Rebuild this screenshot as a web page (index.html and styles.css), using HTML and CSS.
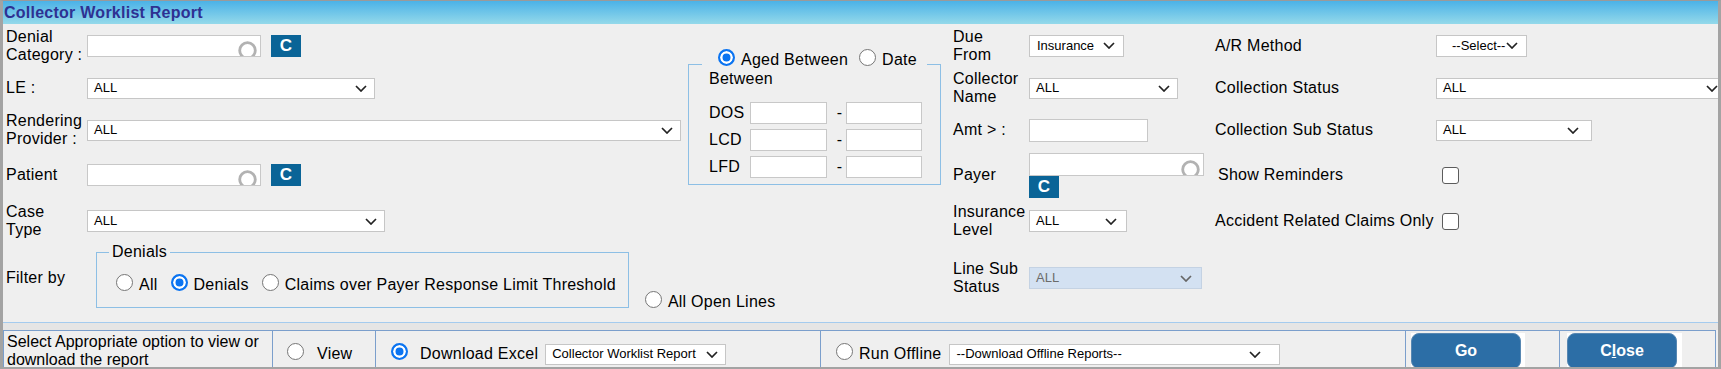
FILE: index.html
```html
<!DOCTYPE html>
<html lang="en">
  <head>
    <meta charset="UTF-8" />
    <title>Collector Worklist Report</title>
    <link rel="stylesheet" href="styles.css">
  </head>
  <body>
    <div class="frame">
      <div class="title-bar">Collector Worklist Report</div>

      <div class="form-grid">
        <!-- row 1 -->
        <div class="lbl lbl-left">Denial<br>Category :</div>
        <div class="ctl">
          <div class="text-box lookup">
            <svg class="ring" width="19" height="19" viewBox="0 0 19 19"><circle cx="9.5" cy="9.5" r="7.8" fill="none" stroke="#b2b2b2" stroke-width="2.8"/></svg>
          </div>
          <span class="c-btn">C</span>
        </div>

        <!-- date range box (rows 1-5) -->
        <div class="range">
          <div class="range-legend">
            <label class="opt"><span class="radio on"></span>Aged Between</label>
            <label class="opt"><span class="radio"></span>Date</label>
          </div>
          <div class="range-sub">Between</div>
          <div class="range-row">
            <span class="range-lbl">DOS</span>
            <span class="text-box from"></span>
            <span class="dash">-</span>
            <span class="text-box to"></span>
          </div>
          <div class="range-row">
            <span class="range-lbl">LCD</span>
            <span class="text-box from"></span>
            <span class="dash">-</span>
            <span class="text-box to"></span>
          </div>
          <div class="range-row">
            <span class="range-lbl">LFD</span>
            <span class="text-box from"></span>
            <span class="dash">-</span>
            <span class="text-box to"></span>
          </div>
        </div>

        <div class="lbl">Due<br>From</div>
        <div class="ctl">
          <div class="select sel-due"><span>Insurance</span><svg class="chev" width="12" height="7" viewBox="0 0 12 7"><path d="M1 1l5 5 5-5" fill="none" stroke="#222" stroke-width="1.7"/></svg></div>
        </div>
        <div class="lbl">A/R Method</div>
        <div class="ctl">
          <div class="select sel-ar"><span>--Select--</span><svg class="chev" width="12" height="7" viewBox="0 0 12 7"><path d="M1 1l5 5 5-5" fill="none" stroke="#222" stroke-width="1.7"/></svg></div>
        </div>

        <!-- row 2 -->
        <div class="lbl lbl-left">LE :</div>
        <div class="ctl">
          <div class="select sel-le"><span>ALL</span><svg class="chev" width="12" height="7" viewBox="0 0 12 7"><path d="M1 1l5 5 5-5" fill="none" stroke="#222" stroke-width="1.7"/></svg></div>
        </div>
        <div class="lbl">Collector<br>Name</div>
        <div class="ctl">
          <div class="select sel-coll"><span>ALL</span><svg class="chev" width="12" height="7" viewBox="0 0 12 7"><path d="M1 1l5 5 5-5" fill="none" stroke="#222" stroke-width="1.7"/></svg></div>
        </div>
        <div class="lbl">Collection Status</div>
        <div class="ctl">
          <div class="select sel-cs"><span>ALL</span><svg class="chev" width="12" height="7" viewBox="0 0 12 7"><path d="M1 1l5 5 5-5" fill="none" stroke="#222" stroke-width="1.7"/></svg></div>
        </div>

        <!-- row 3 -->
        <div class="lbl lbl-left">Rendering<br>Provider :</div>
        <div class="ctl">
          <div class="select sel-rp"><span>ALL</span><svg class="chev" width="12" height="7" viewBox="0 0 12 7"><path d="M1 1l5 5 5-5" fill="none" stroke="#222" stroke-width="1.7"/></svg></div>
        </div>
        <div class="lbl">Amt &gt; :</div>
        <div class="ctl"><div class="text-box amt"></div></div>
        <div class="lbl">Collection Sub Status</div>
        <div class="ctl">
          <div class="select sel-css"><span>ALL</span><svg class="chev" width="12" height="7" viewBox="0 0 12 7"><path d="M1 1l5 5 5-5" fill="none" stroke="#222" stroke-width="1.7"/></svg></div>
        </div>

        <!-- row 4 -->
        <div class="lbl lbl-left">Patient</div>
        <div class="ctl">
          <div class="text-box lookup">
            <svg class="ring" width="19" height="19" viewBox="0 0 19 19"><circle cx="9.5" cy="9.5" r="7.8" fill="none" stroke="#b2b2b2" stroke-width="2.8"/></svg>
          </div>
          <span class="c-btn">C</span>
        </div>
        <div class="lbl">Payer</div>
        <div class="ctl payer">
          <div class="text-box lookup payer-box">
            <svg class="ring" width="19" height="19" viewBox="0 0 19 19"><circle cx="9.5" cy="9.5" r="7.8" fill="none" stroke="#b2b2b2" stroke-width="2.8"/></svg>
          </div>
          <span class="c-btn">C</span>
        </div>
        <div class="lbl reminders">Show Reminders</div>
        <div class="ctl"><span class="check"></span></div>

        <!-- row 5 -->
        <div class="lbl lbl-left">Case<br>Type</div>
        <div class="ctl">
          <div class="select sel-case"><span>ALL</span><svg class="chev" width="12" height="7" viewBox="0 0 12 7"><path d="M1 1l5 5 5-5" fill="none" stroke="#222" stroke-width="1.7"/></svg></div>
        </div>
        <div class="lbl">Insurance<br>Level</div>
        <div class="ctl">
          <div class="select sel-lvl"><span>ALL</span><svg class="chev" width="12" height="7" viewBox="0 0 12 7"><path d="M1 1l5 5 5-5" fill="none" stroke="#222" stroke-width="1.7"/></svg></div>
        </div>
        <div class="lbl">Accident Related Claims Only</div>
        <div class="ctl"><span class="check"></span></div>

        <!-- row 6 -->
        <div class="lbl lbl-left">Filter by</div>
        <div class="filter">
          <fieldset class="denials">
            <legend>Denials</legend>
            <div class="opts">
              <label class="opt"><span class="radio"></span>All</label>
              <label class="opt"><span class="radio on"></span>Denials</label>
              <label class="opt"><span class="radio"></span>Claims over Payer Response Limit Threshold</label>
            </div>
          </fieldset>
          <label class="opt open-lines"><span class="radio"></span>All Open Lines</label>
        </div>
        <div class="lbl">Line Sub<br>Status</div>
        <div class="ctl">
          <div class="select sel-line disabled"><span>ALL</span><svg class="chev" width="12" height="7" viewBox="0 0 12 7"><path d="M1 1l5 5 5-5" fill="none" stroke="#666" stroke-width="1.7"/></svg></div>
        </div>
      </div>

      <div class="sep"></div>

      <div class="action-bar">
        <div class="cell note">Select Appropriate option to view or download the report</div>
        <div class="cell view">
          <label class="opt"><span class="radio"></span>View</label>
        </div>
        <div class="cell excel">
          <label class="opt"><span class="radio on"></span>Download Excel</label>
          <div class="select sel-dl"><span>Collector Worklist Report</span><svg class="chev" width="12" height="7" viewBox="0 0 12 7"><path d="M1 1l5 5 5-5" fill="none" stroke="#222" stroke-width="1.7"/></svg></div>
        </div>
        <div class="cell offline">
          <label class="opt"><span class="radio"></span>Run Offline</label>
          <div class="select sel-off"><span>--Download Offline Reports--</span><svg class="chev" width="12" height="7" viewBox="0 0 12 7"><path d="M1 1l5 5 5-5" fill="none" stroke="#222" stroke-width="1.7"/></svg></div>
        </div>
        <div class="cell go">
          <span class="btn-back"><span class="btn">Go</span></span>
        </div>
        <div class="cell close">
          <span class="btn-back"><span class="btn">C<u>l</u>ose</span></span>
        </div>
      </div>
    </div>
  </body>
</html>
```

FILE: styles.css
```css
* {
  box-sizing: border-box;
}

body {
  margin: 0;
  font-family: "Liberation Sans", Arial, sans-serif;
  font-size: 16px;
  line-height: 18px;
  letter-spacing: 0.25px;
  color: #000;
  background-color: #efefef;
}

.frame {
  width: 1721px;
  height: 369px;
  border-top: 1px solid #9a9a9a;
  border-left: 3px solid #a3a3a3;
  border-right: 3px solid #a3a3a3;
  border-bottom: 2px solid #a3a3a3;
  background-color: #efefef;
  overflow: hidden;
}

.title-bar {
  height: 23px;
  line-height: 23px;
  padding-left: 1px;
  background: linear-gradient(#4bb2e7, #94d9ea);
  color: #2e3192;
  font-weight: bold;
}

/* main form: shared rows for all four columns */
.form-grid {
  display: grid;
  grid-template-columns: 84px 601px 265px 76px 186px 221px 1fr;
  grid-template-rows: 41px 44px 40px 50px 42px 72px;
  align-items: center;
  padding-top: 1px;
}

.lbl {
  white-space: nowrap;
}

.lbl-left {
  padding-left: 3px;
}

.reminders {
  padding-left: 3px;
}

.ctl {
  display: flex;
  align-items: center;
  gap: 10px;
}

.payer {
  flex-direction: column;
  align-items: flex-start;
  gap: 0;
}

.text-box {
  display: block;
  height: 22px;
  border: 1px solid #c8c8c8;
  background-color: #fff;
}

.lookup {
  display: flex;
  justify-content: flex-end;
  align-items: flex-end;
  width: 174px;
  padding-right: 3px;
  overflow: hidden;
}

.ring {
  flex: none;
  margin-bottom: -4px;
}

.payer-box {
  width: 175px;
  height: 23px;
}

.amt {
  width: 119px;
  height: 23px;
}

.c-btn {
  display: flex;
  justify-content: center;
  align-items: center;
  width: 30px;
  height: 22px;
  background-color: #0a6497;
  color: #fff;
  font-weight: bold;
  font-size: 17px;
}

.select {
  display: flex;
  justify-content: space-between;
  align-items: center;
  height: 22px;
  padding: 0 7px 0 6px;
  border: 1px solid #c6c6c6;
  background-color: #fff;
  font-size: 13px;
  letter-spacing: 0;
  white-space: nowrap;
  flex: none;
}

.chev {
  flex: none;
}

.select.disabled {
  background-color: #d3e1f2;
  border-color: #c4d2e3;
  color: #6b6b6b;
}

.sel-le { width: 288px; height: 21px; }
.sel-rp { width: 594px; height: 21px; }
.sel-case { width: 298px; }
.sel-due { width: 95px; padding-left: 7px; padding-right: 8px; }
.sel-coll { width: 149px; height: 21px; }
.sel-lvl { width: 98px; padding-right: 9px; }
.sel-line { width: 173px; padding-right: 9px; }
.sel-ar { width: 91px; padding-left: 15px; padding-right: 8px; }
.sel-cs { width: 290px; height: 21px; }
.sel-css { width: 156px; height: 21px; padding-right: 12px; }
.sel-dl { width: 181px; height: 21px; }
.sel-off { width: 331px; height: 21px; padding-right: 18px; padding-left: 7px; }

.check {
  display: block;
  width: 17px;
  height: 17px;
  margin-left: 6px;
  border: 1px solid #5c5c5c;
  border-radius: 3px;
  background-color: #fff;
}

/* radio buttons */
.opt {
  display: flex;
  align-items: center;
  gap: 6px;
  white-space: nowrap;
}

.radio {
  display: block;
  flex: none;
  width: 17px;
  height: 17px;
  margin-top: -6px;
  border: 1px solid #767676;
  border-radius: 50%;
  background-color: #fff;
}

.radio.on {
  border: 2px solid #0b74f1;
  background-color: #0b74f1;
  box-shadow: inset 0 0 0 2.5px #fff;
}

/* Aged / Date between box */
.range {
  grid-column: 3;
  grid-row: 1 / 6;
  align-self: start;
  justify-self: start;
  width: 253px;
  margin-top: 39px;
  padding: 0 0 6px 20px;
  border: 1px solid #8dbfe5;
}

.range-legend {
  display: flex;
  align-items: center;
  gap: 11px;
  width: fit-content;
  height: 18px;
  margin: -14px 0 0 -7px;
  padding: 0 10px 0 16px;
  background-color: #efefef;
}

.range-sub {
  margin-top: 1px;
}

.range-row {
  display: flex;
  align-items: center;
  height: 22px;
  margin-top: 5px;
}

.range-sub + .range-row {
  margin-top: 14px;
}

.range-lbl {
  width: 41px;
}

.range .from {
  width: 77px;
}

.range .to {
  width: 76px;
}

.dash {
  width: 19px;
  padding-left: 6px;
  text-align: center;
}

/* filter by */
.filter {
  grid-column: span 2;
  align-self: start;
  display: flex;
  align-items: flex-end;
  margin-top: 1px;
}

.denials {
  margin: 0 0 0 9px;
  padding: 15px 12px 13px 12px;
  border: 1px solid #8dbfe5;
  min-inline-size: auto;
}

.denials legend {
  padding: 0 3px;
}

.opts {
  display: flex;
  gap: 13px;
  margin-left: 7px;
}

.open-lines {
  margin-left: 16px;
  margin-bottom: -3px;
}

/* bottom action bar */
.sep {
  height: 8px;
  margin-top: 8px;
  border-top: 1px solid #a4cbee;
  background-color: #e5e5e5;
}

.action-bar {
  display: flex;
  width: 1713px;
  height: 46px;
  border-top: 1px solid #7b9fcc;
  border-left: 1px solid #7b9fcc;
}

.cell {
  display: flex;
  align-items: center;
  height: 46px;
  border-right: 1px solid #7b9fcc;
  flex: none;
}

.note {
  width: 269px;
  align-items: flex-start;
  padding: 2px 0 0 3px;
  letter-spacing: 0;
}

.view {
  width: 103px;
  padding-left: 14px;
}

.view .opt {
  gap: 13px;
}

.excel {
  width: 445px;
  padding-left: 15px;
  gap: 7px;
}

.excel .opt {
  gap: 12px;
}

.offline {
  width: 585px;
  padding-left: 15px;
  gap: 7px;
}

.go {
  width: 154px;
  padding-left: 5px;
  align-items: flex-start;
}

.close {
  width: 156px;
  padding-left: 7px;
  align-items: flex-start;
}

.btn-back {
  display: block;
  width: 114px;
  height: 40px;
  margin-top: 2px;
  background-color: #fff;
}

.close .btn-back {
  width: 115px;
}

.btn {
  display: flex;
  justify-content: center;
  align-items: center;
  width: 110px;
  height: 36px;
  border: 1px solid #5787b2;
  border-radius: 8px;
  background-color: #2c6ea6;
  color: #fff;
  font-weight: bold;
  letter-spacing: 0;
}
```
